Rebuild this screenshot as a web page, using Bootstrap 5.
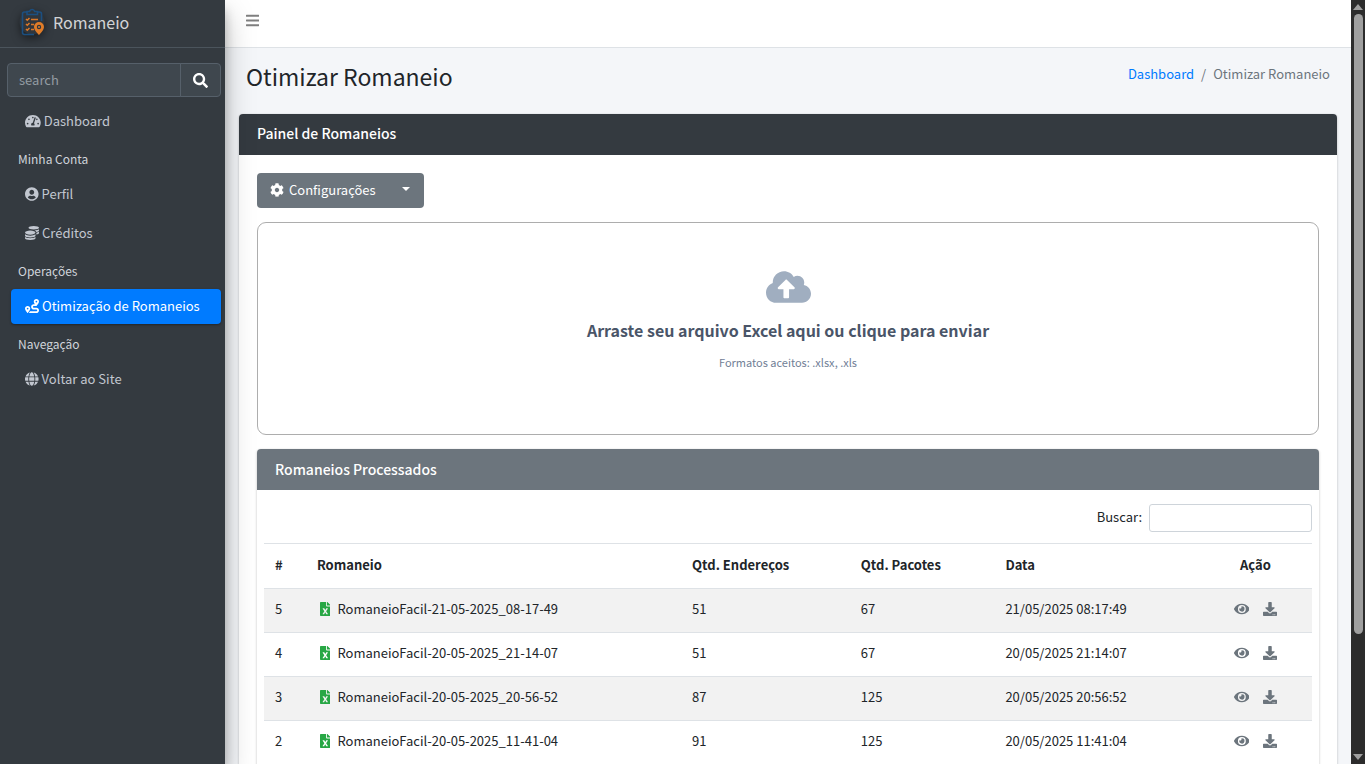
<!DOCTYPE html>
<html lang="pt-BR">
<head>
<meta charset="utf-8">
<meta name="viewport" content="width=device-width, initial-scale=1">
<title>Otimizar Romaneio</title>
<link rel="stylesheet" href="https://cdn.jsdelivr.net/npm/bootstrap@5.3.0/dist/css/bootstrap.min.css">
<style>
  :root { --dark: #343a40; --gray: #6c757d; --line: #dee2e6; }
  body { font-family: "Noto Sans CJK JP", "Open Sans", sans-serif; font-size: 13px; line-height: 22px; color: #212529; background: #f4f6f9; }
  .fa-icon { height: 14px; width: auto; fill: currentColor; flex: none; }
  .fa-icon.fa-big { height: 15px; }
  a { text-decoration: none; }

  .app-sidebar { width: 225px; background: var(--dark); color: #c2c7d0; z-index: 5; box-shadow: 0 14px 28px rgba(0,0,0,.25), 0 10px 10px rgba(0,0,0,.22); }
  .app-brand { height: 48px; border-bottom: 1px solid #4b545c; font-size: 16px; color: rgba(255,255,255,.8); padding: 0 0 4px 19px; gap: 5px; }
  .app-brand svg { width: 29px; height: 30px; filter: drop-shadow(0 3px 4px rgba(0,0,0,.5)); }
  .side-search { padding: 15px 4px 0 7px; }
  .side-search .form-control, .side-search .btn { background: #3f474e; border-color: #56606a; color: #fff; font-size: 13px; line-height: 22px; height: 34px; padding: 4px 11px 6px; border-radius: 4px; }
  .side-search .form-control::placeholder { color: #939ba2; }
  .side-search .btn { width: 41px; padding: 0 0 2px; }
  .side-nav { padding: 7px 4px 0 11px; }
  .side-nav .nav-link { color: #c2c7d0; height: 35px; padding: 0 14px 1px; margin-bottom: 4px; gap: 3px; border-radius: 4px; }
  .side-nav .nav-link.active { background: #007bff; color: #fff; box-shadow: 0 1px 3px rgba(0,0,0,.12), 0 1px 2px rgba(0,0,0,.24); }
  .side-head { height: 34px; padding: 5px 7px; font-size: 12px; color: #d0d4db; }

  .app-main { min-width: 0; overflow-y: auto; scrollbar-width: none; }
  .app-main::-webkit-scrollbar { display: none; }
  .app-top { height: 48px; background: #fff; border-bottom: 1px solid var(--line); padding: 0 21px; }
  .menu-btn { color: rgba(0,0,0,.5); line-height: 14px; margin-bottom: 8px; }
  .page-head { padding: 12px 21px 0; height: 66px; }
  .page-head h1 { font-size: 23px; line-height: 32px; }
  .breadcrumb { --bs-breadcrumb-divider-color: #6c757d; --bs-breadcrumb-item-active-color: #6c757d; --bs-breadcrumb-item-padding-x: 7px; padding-top: 3px; }
  .breadcrumb a { color: #007bff; }
  .page-content { padding: 0 14px 14px; }

  .panel { border: 0; border-radius: 4px; box-shadow: 0 0 1px rgba(0,0,0,.13), 0 1px 3px rgba(0,0,0,.2); }
  .panel > .card-header { height: 41px; padding: 8px 18px; border: 0; color: #fff; border-radius: 4px 4px 0 0; }
  .panel h2, .panel h3 { font-size: 14px; line-height: 22px; font-weight: 500; }
  .panel-dark > .card-header { background: var(--dark); }
  .panel-gray > .card-header { background: var(--gray); padding-top: 9px; }
  .panel-body { padding: 18px; display: flex; flex-direction: column; gap: 14px; }
  .panel-body > .btn-group { align-self: flex-start; }
  .btn-config { background: var(--gray); color: #fff; height: 35px; font-size: 13px; line-height: 22px; border: 0; border-radius: 4px; padding: 0 14px 2px 13px; gap: 5px; }
  .btn-config:hover { background: #5a6268; color: #fff; }
  .btn-config.dropdown-toggle::after { border-width: 4px 4px 0; }
  .drop-zone { height: 213px; border: 1px solid #adadad; border-radius: 9px; color: #4a5568; cursor: pointer; padding-top: 46px; }
  .drop-zone .fa-icon { height: 36px; color: #a0aec0; }
  .drop-title { font-size: 16px; line-height: 24px; margin-top: 13px; }
  .drop-hint { font-size: 11px; line-height: 18px; margin-top: 11px; color: #718096; }

  .filter-row { padding: 14px 7px 11px; gap: 7px; }
  .filter-row label { padding-bottom: 2px; }
  .filter-row .form-control { width: 163px; height: 28px; border-color: #ced4da; border-radius: 3px; padding: 0 7px; font-size: 13px; }
  .grid-wrap { padding: 0 7px 7px; }
  .grid { --bs-table-bg: #fff; --bs-table-striped-bg: #f2f2f2; --bs-table-color: #212529; --bs-table-striped-color: #212529; table-layout: fixed; border-color: var(--line); }
  .grid > :not(caption) > * > * { padding: 9px 11px 12px; border-width: 1px 0 0; height: 44px; }
  .grid > thead > tr > * { height: 45px; }
  .grid td svg { vertical-align: -2px; }
  .grid .xls { color: #28a745; margin: 0 7px 0 3px; }
  .grid .act { color: var(--gray); margin: 0 7px; }
  .col-id { width: 4%; } .col-name { width: 35.8%; } .col-addr { width: 16.1%; } .col-pack { width: 13.8%; } .col-act { width: 10.8%; }

  .scroll-rail { width: 14px; background: #2c2c2c; padding: 4px 0; }
  .scroll-rail span { width: 9px; background: #9f9f9f; border-radius: 5px; }
  .scroll-rail svg { fill: #9f9f9f; width: 10px; height: 6px; }
</style>
</head>
<body class="vh-100 d-flex overflow-hidden">
<svg class="d-none" aria-hidden="true">
  <symbol id="xls" viewBox="0 0 384 512"><path d="M224 136V0H24C10.7 0 0 10.7 0 24v464c0 13.3 10.7 24 24 24h336c13.3 0 24-10.7 24-24V160H248c-13.2 0-24-10.8-24-24zm60.1 106.5L224 336l60.1 93.5c5.1 8-.6 18.5-10.1 18.5h-34.9c-4.4 0-8.5-2.4-10.6-6.3C208.9 405.5 192 373 192 373c-6.4 14.8-10 20-36.6 68.8-2.1 3.9-6.1 6.3-10.5 6.3H110c-9.5 0-15.2-10.5-10.1-18.5l60.3-93.5-60.3-93.5c-5.2-8 .6-18.5 10.1-18.5h34.8c4.4 0 8.5 2.4 10.6 6.3 26.1 48.8 20 33.6 36.6 68.5 0 0 6.1-11.7 36.6-68.5 2.1-3.9 6.2-6.3 10.6-6.3H274c9.5-.1 15.2 10.4 10.1 18.4zM384 121.9v6.1H256V0h6.1c6.4 0 12.5 2.5 17 7l97.9 98c4.5 4.5 7 10.6 7 16.9z"/></symbol>
  <symbol id="eye" viewBox="0 0 576 512"><path d="M572.52 241.4C518.29 135.59 410.93 64 288 64S57.68 135.64 3.48 241.41a32.35 32.35 0 0 0 0 29.19C57.71 376.41 165.07 448 288 448s230.32-71.64 284.52-177.41a32.35 32.35 0 0 0 0-29.19zM288 400a144 144 0 1 1 144-144 143.93 143.93 0 0 1-144 144zm0-240a95.31 95.31 0 0 0-25.31 3.79 47.85 47.85 0 0 1-66.9 66.9A95.78 95.78 0 1 0 288 160z"/></symbol>
  <symbol id="download" viewBox="0 0 512 512"><path d="M216 0h80c13.3 0 24 10.7 24 24v168h87.7c17.8 0 26.7 21.5 14.1 34.1L269.7 378.3c-7.5 7.5-19.8 7.5-27.3 0L90.1 226.1c-12.6-12.6-3.7-34.1 14.1-34.1H192V24c0-13.3 10.7-24 24-24zm296 376v112c0 13.3-10.7 24-24 24H24c-13.3 0-24-10.7-24-24V376c0-13.3 10.7-24 24-24h146.7l49 49c20.1 20.1 52.5 20.1 72.6 0l49-49H488c13.3 0 24 10.7 24 24zm-124 88c0-11-9-20-20-20s-20 9-20 20 9 20 20 20 20-9 20-20zm64 0c0-11-9-20-20-20s-20 9-20 20 9 20 20 20 20-9 20-20z"/></symbol>
</svg>

<aside class="app-sidebar position-relative flex-shrink-0">
  <a href="#" class="app-brand d-flex align-items-center">
    <svg viewBox="0 0 29 30" aria-hidden="true">
      <circle cx="13" cy="15" r="12.500" fill="#30363c"/>
      <path d="M8 5H5.500A2 2 0 0 0 3.500 7v18.500a2 2 0 0 0 2 2H15M18 5h2.500a2 2 0 0 1 2 2v7M8 7.500V4.500h2.500a2.700 2.700 0 0 1 5.200 0H18.500v3z" fill="none" stroke="#1b4f80" stroke-width="1.600"/>
      <path d="M7 12l1.300 1.300L10.500 11M7 17l1.300 1.300L10.500 16M7 22l1.300 1.300L10.500 21M12 12.500h7M12 17.500h3M12 22.500h3" fill="none" stroke="#d9782a" stroke-width="1.500"/>
      <path fill-rule="evenodd" d="M20 15a5 5 0 0 0-5 5c0 3.300 5 8 5 8s5-4.700 5-8a5 5 0 0 0-5-5zm0 2.800a2.200 2.200 0 1 1 0 4.400 2.200 2.200 0 0 1 0-4.400z" fill="#e07c28"/>
      <circle cx="20" cy="20" r="1" fill="#e07c28"/>
    </svg>
    <span>Romaneio</span>
  </a>
  <form class="side-search input-group" role="search">
    <input type="search" class="form-control" placeholder="search" aria-label="search">
    <button type="button" class="btn" aria-label="Pesquisar"><svg class="fa-icon fa-big" viewBox="0 0 512 512"><path d="M505 442.700L405.300 343c-4.500-4.500-10.600-7-17-7H372c27.600-35.300 44-79.700 44-128C416 93.100 322.900 0 208 0S0 93.100 0 208s93.100 208 208 208c48.300 0 92.700-16.400 128-44v16.300c0 6.400 2.500 12.500 7 17l99.700 99.700c9.400 9.400 24.600 9.400 33.900 0l28.300-28.300c9.400-9.400 9.400-24.600.1-34zM208 336c-70.700 0-128-57.200-128-128 0-70.700 57.200-128 128-128 70.700 0 128 57.200 128 128 0 70.700-57.200 128-128 128z"/></svg></button>
  </form>
  <nav class="side-nav nav flex-column">
    <a href="#" class="nav-link d-flex align-items-center"><svg class="fa-icon" viewBox="0 0 576 512"><path d="M288 32C128.940 32 0 160.940 0 320c0 52.800 14.250 102.260 39.060 144.800 5.610 9.620 16.300 15.200 27.440 15.200h443c11.140 0 21.830-5.580 27.440-15.200C561.750 422.260 576 372.800 576 320c0-159.060-128.940-288-288-288zm0 64c14.710 0 26.580 10.130 30.320 23.650-1.110 2.260-2.640 4.230-3.450 6.670l-9.220 27.670c-5.130 3.490-10.970 6.010-17.640 6.010-17.670 0-32-14.330-32-32S270.330 96 288 96zM96 384c-17.670 0-32-14.330-32-32s14.330-32 32-32 32 14.330 32 32-14.330 32-32 32zm48-160c-17.670 0-32-14.330-32-32s14.330-32 32-32 32 14.330 32 32-14.330 32-32 32zm246.770-72.410l-61.330 184C343.130 347.330 352 364.540 352 384c0 11.720-3.380 22.550-8.880 32H232.880c-5.500-9.450-8.880-20.280-8.880-32 0-33.940 26.500-61.430 59.900-63.590l61.340-184.010c4.170-12.560 17.730-19.450 30.360-15.170 12.570 4.190 19.350 17.790 15.170 30.360zm14.660 57.200l15.520-46.550c3.470-1.290 7.130-2.230 11.050-2.230 17.670 0 32 14.330 32 32s-14.330 32-32 32c-11.380-.01-20.890-6.280-26.570-15.220zM480 384c-17.670 0-32-14.330-32-32s14.330-32 32-32 32 14.330 32 32-14.330 32-32 32z"/></svg>Dashboard</a>
    <div class="side-head">Minha Conta</div>
    <a href="#" class="nav-link d-flex align-items-center"><svg class="fa-icon" viewBox="0 0 496 512"><path d="M248 8C111 8 0 119 0 256s111 248 248 248 248-111 248-248S385 8 248 8zm0 96c48.600 0 88 39.400 88 88s-39.400 88-88 88-88-39.400-88-88 39.400-88 88-88zm0 344c-58.700 0-111.300-26.600-146.500-68.200 18.800-35.400 55.600-59.800 98.500-59.800 2.400 0 4.800.4 7.100 1.100 13 4.200 26.600 6.900 40.900 6.900 14.300 0 28-2.700 40.900-6.900 2.300-.7 4.700-1.100 7.100-1.100 42.900 0 79.700 24.400 98.500 59.800C359.300 421.400 306.700 448 248 448z"/></svg>Perfil</a>
    <a href="#" class="nav-link d-flex align-items-center"><svg class="fa-icon" viewBox="0 0 512 512"><path d="M0 405.300V448c0 35.300 86 64 192 64s192-28.700 192-64v-42.700C342.700 434.400 267.200 448 192 448S41.300 434.400 0 405.300zM320 128c106 0 192-28.700 192-64S426 0 320 0 128 28.700 128 64s86 64 192 64zM0 300.400V352c0 35.300 86 64 192 64s192-28.700 192-64v-51.600c-41.300 34-116.900 51.600-192 51.600S41.300 334.400 0 300.400zm416 11c57.300-11.100 96-31.700 96-55.400v-42.700c-23.200 16.400-57.300 27.600-96 34.500v63.600zM192 160C86 160 0 195.800 0 240s86 80 192 80 192-35.800 192-80-86-80-192-80zm219.300 56.300c60-10.800 100.700-32 100.700-56.300v-42.700c-35.500 25.100-96.500 38.600-160.700 41.800 29.500 14.300 51.200 33.500 60 57.200z"/></svg>Créditos</a>
    <div class="side-head">Operações</div>
    <a href="#" class="nav-link active d-flex align-items-center" aria-current="page"><svg class="fa-icon" viewBox="0 0 512 512"><path d="M416 320h-96c-17.600 0-32-14.400-32-32s14.400-32 32-32h96s96-107 96-160-43-96-96-96-96 43-96 96c0 25.500 22.200 63.400 45.300 96H320c-52.900 0-96 43.100-96 96s43.100 96 96 96h96c17.600 0 32 14.400 32 32s-14.400 32-32 32H185.500c-16 24.800-33.800 47.700-47.300 64H416c52.900 0 96-43.100 96-96s-43.100-96-96-96zm0-256c17.700 0 32 14.300 32 32s-14.300 32-32 32-32-14.300-32-32 14.300-32 32-32zM96 256c-53 0-96 43-96 96s96 160 96 160 96-107 96-160-43-96-96-96zm0 128c-17.700 0-32-14.300-32-32s14.300-32 32-32 32 14.300 32 32-14.300 32-32 32z"/></svg>Otimização de Romaneios</a>
    <div class="side-head">Navegação</div>
    <a href="#" class="nav-link d-flex align-items-center"><svg class="fa-icon" viewBox="0 0 496 512"><path d="M336.500 160C322 70.700 287.800 8 248 8s-74 62.700-88.500 152h177zM152 256c0 22.200 1.200 43.500 3.300 64h185.300c2.100-20.500 3.300-41.800 3.300-64s-1.200-43.500-3.300-64H155.300c-2.100 20.500-3.300 41.800-3.300 64zm324.700-96c-28.600-67.900-86.500-120.400-158-141.600 24.400 33.800 41.200 84.700 50 141.600h108zM177.200 18.400C105.800 39.600 47.800 92.100 19.300 160h108c8.700-56.900 25.500-107.800 49.900-141.600zM487.400 192H372.700c2.100 21 3.300 42.500 3.300 64s-1.200 43-3.300 64h114.600c5.500-20.500 8.600-41.800 8.600-64s-3.100-43.500-8.500-64zM120 256c0-21.500 1.200-43 3.300-64H8.600C3.200 212.500 0 233.800 0 256s3.200 43.500 8.600 64h114.600c-2-21-3.200-42.500-3.200-64zm39.500 96c14.500 89.300 48.700 152 88.500 152s74-62.700 88.500-152h-177zm159.300 141.600c71.400-21.200 129.400-73.700 158-141.600h-108c-8.800 56.900-25.600 107.800-50 141.600zM19.300 352c28.600 67.900 86.500 120.400 158 141.600-24.400-33.800-41.200-84.700-50-141.600h-108z"/></svg>Voltar ao Site</a>
  </nav>
</aside>

<main class="app-main flex-grow-1">
  <header class="app-top d-flex align-items-center">
    <button type="button" class="menu-btn btn border-0 p-0" aria-label="Menu"><svg class="fa-icon fa-big" viewBox="0 0 448 512"><path d="M16 132h416c8.837 0 16-7.163 16-16V76c0-8.837-7.163-16-16-16H16C7.163 60 0 67.163 0 76v40c0 8.837 7.163 16 16 16zm0 160h416c8.837 0 16-7.163 16-16v-40c0-8.837-7.163-16-16-16H16c-8.837 0-16 7.163-16 16v40c0 8.837 7.163 16 16 16zm0 160h416c8.837 0 16-7.163 16-16v-40c0-8.837-7.163-16-16-16H16c-8.837 0-16 7.163-16 16v40c0 8.837 7.163 16 16 16z"/></svg></button>
  </header>
  <div class="page-head d-flex justify-content-between align-items-start">
    <h1 class="m-0 fw-normal">Otimizar Romaneio</h1>
    <nav aria-label="breadcrumb"><ol class="breadcrumb mb-0">
      <li class="breadcrumb-item"><a href="#">Dashboard</a></li>
      <li class="breadcrumb-item active" aria-current="page">Otimizar Romaneio</li>
    </ol></nav>
  </div>
  <div class="page-content">
    <section class="panel panel-dark card">
      <div class="card-header"><h2 class="m-0">Painel de Romaneios</h2></div>
      <div class="card-body panel-body">
        <div class="btn-group">
          <button type="button" class="btn btn-config d-flex align-items-center"><svg class="fa-icon" viewBox="0 0 512 512"><path d="M487.400 315.700l-42.600-24.600c4.300-23.200 4.300-47 0-70.200l42.600-24.600c4.900-2.800 7.100-8.600 5.500-14-11.100-35.600-30-67.800-54.700-94.600-3.800-4.100-10-5.100-14.800-2.300L380.800 110c-17.900-15.400-38.500-27.300-60.800-35.100V25.800c0-5.600-3.900-10.500-9.400-11.700-36.700-8.200-74.300-7.800-109.200 0-5.500 1.200-9.400 6.100-9.400 11.700V75c-22.200 7.900-42.800 19.800-60.800 35.100L88.700 85.500c-4.900-2.800-11-1.900-14.800 2.300-24.700 26.700-43.600 58.900-54.700 94.600-1.700 5.400.6 11.200 5.500 14L67.300 221c-4.300 23.200-4.300 47 0 70.200l-42.600 24.600c-4.900 2.800-7.100 8.600-5.500 14 11.100 35.600 30 67.800 54.700 94.600 3.800 4.100 10 5.100 14.800 2.300l42.600-24.600c17.900 15.400 38.500 27.300 60.800 35.100v49.200c0 5.600 3.900 10.500 9.400 11.700 36.700 8.200 74.300 7.800 109.200 0 5.500-1.200 9.400-6.100 9.400-11.700v-49.200c22.200-7.900 42.800-19.800 60.800-35.100l42.600 24.600c4.900 2.800 11 1.900 14.800-2.300 24.700-26.700 43.600-58.900 54.700-94.600 1.500-5.500-.7-11.300-5.600-14.100zM256 336c-44.100 0-80-35.900-80-80s35.900-80 80-80 80 35.900 80 80-35.900 80-80 80z"/></svg>Configurações</button>
          <button type="button" class="btn btn-config dropdown-toggle" data-bs-toggle="dropdown" aria-expanded="false" aria-label="Opções"></button>
        </div>
        <div class="drop-zone text-center" role="button" tabindex="0">
          <svg class="fa-icon d-block mx-auto" viewBox="0 0 640 512"><path d="M537.600 226.600c4.100-10.700 6.400-22.400 6.400-34.600 0-53-43-96-96-96-19.700 0-38.100 6-53.300 16.200C367 64.200 315.300 32 256 32c-88.400 0-160 71.600-160 160 0 2.700.1 5.400.2 8.100C40.200 219.800 0 273.200 0 336c0 79.500 64.500 144 144 144h368c70.700 0 128-57.300 128-128 0-61.900-44-113.600-102.400-125.400zM393.400 288H328v112c0 8.800-7.200 16-16 16h-48c-8.800 0-16-7.200-16-16V288h-65.400c-14.300 0-21.400-17.200-11.300-27.300l105.400-105.400c6.200-6.200 16.400-6.200 22.600 0l105.400 105.400c10.100 10.100 2.900 27.300-11.300 27.300z"/></svg>
          <div class="drop-title fw-bold">Arraste seu arquivo Excel aqui ou clique para enviar</div>
          <div class="drop-hint">Formatos aceitos: .xlsx, .xls</div>
        </div>
        <section class="panel panel-gray card">
          <div class="card-header"><h3 class="m-0">Romaneios Processados</h3></div>
          <div class="card-body p-0">
            <div class="filter-row d-flex justify-content-end align-items-center">
              <label for="buscar">Buscar:</label>
              <input type="search" id="buscar" class="form-control">
            </div>
            <div class="grid-wrap">
              <table class="grid table table-striped align-middle mb-0">
                <thead><tr><th class="col-id">#</th><th class="col-name">Romaneio</th><th class="col-addr">Qtd. Endereços</th><th class="col-pack">Qtd. Pacotes</th><th>Data</th><th class="col-act text-center">Ação</th></tr></thead>
                <tbody>
                  <tr><td>5</td><td><svg class="fa-icon xls" viewBox="0 0 384 512"><use href="#xls"/></svg>RomaneioFacil-21-05-2025_08-17-49</td><td>51</td><td>67</td><td>21/05/2025 08:17:49</td><td class="text-center text-nowrap"><a href="#" class="act" aria-label="Ver"><svg class="fa-icon" viewBox="0 0 576 512"><use href="#eye"/></svg></a><a href="#" class="act" aria-label="Baixar"><svg class="fa-icon" viewBox="0 0 512 512"><use href="#download"/></svg></a></td></tr>
                  <tr><td>4</td><td><svg class="fa-icon xls" viewBox="0 0 384 512"><use href="#xls"/></svg>RomaneioFacil-20-05-2025_21-14-07</td><td>51</td><td>67</td><td>20/05/2025 21:14:07</td><td class="text-center text-nowrap"><a href="#" class="act" aria-label="Ver"><svg class="fa-icon" viewBox="0 0 576 512"><use href="#eye"/></svg></a><a href="#" class="act" aria-label="Baixar"><svg class="fa-icon" viewBox="0 0 512 512"><use href="#download"/></svg></a></td></tr>
                  <tr><td>3</td><td><svg class="fa-icon xls" viewBox="0 0 384 512"><use href="#xls"/></svg>RomaneioFacil-20-05-2025_20-56-52</td><td>87</td><td>125</td><td>20/05/2025 20:56:52</td><td class="text-center text-nowrap"><a href="#" class="act" aria-label="Ver"><svg class="fa-icon" viewBox="0 0 576 512"><use href="#eye"/></svg></a><a href="#" class="act" aria-label="Baixar"><svg class="fa-icon" viewBox="0 0 512 512"><use href="#download"/></svg></a></td></tr>
                  <tr><td>2</td><td><svg class="fa-icon xls" viewBox="0 0 384 512"><use href="#xls"/></svg>RomaneioFacil-20-05-2025_11-41-04</td><td>91</td><td>125</td><td>20/05/2025 11:41:04</td><td class="text-center text-nowrap"><a href="#" class="act" aria-label="Ver"><svg class="fa-icon" viewBox="0 0 576 512"><use href="#eye"/></svg></a><a href="#" class="act" aria-label="Baixar"><svg class="fa-icon" viewBox="0 0 512 512"><use href="#download"/></svg></a></td></tr>
                </tbody>
              </table>
            </div>
          </div>
        </section>
      </div>
    </section>
  </div>
</main>

<div class="scroll-rail d-flex flex-column align-items-center flex-shrink-0" aria-hidden="true">
  <svg viewBox="0 0 10 6"><path d="M5 0l5 6H0z"/></svg>
  <span class="my-1" style="height:82%"></span>
  <svg class="mt-auto" viewBox="0 0 10 6"><path d="M5 6l5-6H0z"/></svg>
</div>
<script src="https://cdn.jsdelivr.net/npm/bootstrap@5.3.0/dist/js/bootstrap.bundle.min.js"></script>
</body>
</html>
